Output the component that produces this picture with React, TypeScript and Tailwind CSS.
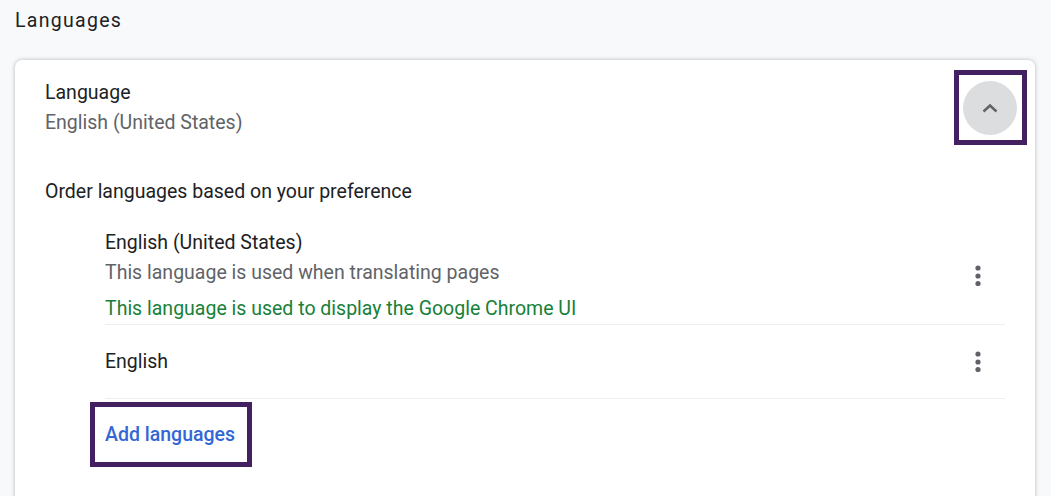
import React from "react";

function Dots() {
  return (
    <svg width="8" height="22" viewBox="0 0 8 22" className="block">
      <circle cx="4" cy="3" r="2.6" fill="#5f6368" />
      <circle cx="4" cy="11" r="2.6" fill="#5f6368" />
      <circle cx="4" cy="18.5" r="2.6" fill="#5f6368" />
    </svg>
  );
}

export default function App() {
  return (
    <div className="h-[496px] w-[1051px] overflow-hidden bg-[#f8f9fa] font-['Roboto',sans-serif] text-[19.5px] leading-[30px] text-[#202124]">
      <h1 className="pl-[15px] pt-[6px] h-[60px] text-[19.5px] leading-[30px] font-normal tracking-[1.3px]">Languages</h1>
      <div className="relative ml-[15px] mr-[16px] h-[500px] rounded-t-[7px] bg-white shadow-[0_0_4px_rgba(60,64,67,0.35)]">
        <div className="flex items-start justify-between pl-[30px] pr-[18px] pt-[18px]">
          <div>
            <div>Language</div>
            <div className="text-[#5f6368]">English (United States)</div>
          </div>
          <div className="mt-[3px] flex h-[54px] w-[54px] items-center justify-center rounded-full bg-[#dcdddf]">
            <svg width="18" height="12" viewBox="0 0 18 12" fill="none">
              <path d="M2.5 9.5 9 3.5l6.5 6" stroke="#5f6368" strokeWidth="2.4" />
            </svg>
          </div>
        </div>
        <div className="pl-[30px] pt-[39px]">Order languages based on your preference</div>
        <div className="ml-[90px] mr-[30px] mt-[21px]">
          <div className="flex h-[97px] items-center justify-between border-b border-[#eeeeee] pr-[23px]">
            <div className="self-start">
              <div>English (United States)</div>
              <div className="text-[#5f6368]">This language is used when translating pages</div>
              <div className="mt-[6px] text-[#188038]">This language is used to display the Google Chrome UI</div>
            </div>
            <Dots />
          </div>
          <div className="flex h-[74px] items-center justify-between border-b border-[#eeeeee] pr-[23px]">
            <div>English</div>
            <Dots />
          </div>
          <div className="pt-[21px] font-medium text-[#3367d6]">Add languages</div>
        </div>
        <div className="absolute right-[8px] top-[10px] h-[75px] w-[73px] border-[5px] border-[#432160]" />
        <div className="absolute left-[75px] top-[342px] h-[65px] w-[162px] border-[5px] border-[#432160]" />
      </div>
    </div>
  );
}
